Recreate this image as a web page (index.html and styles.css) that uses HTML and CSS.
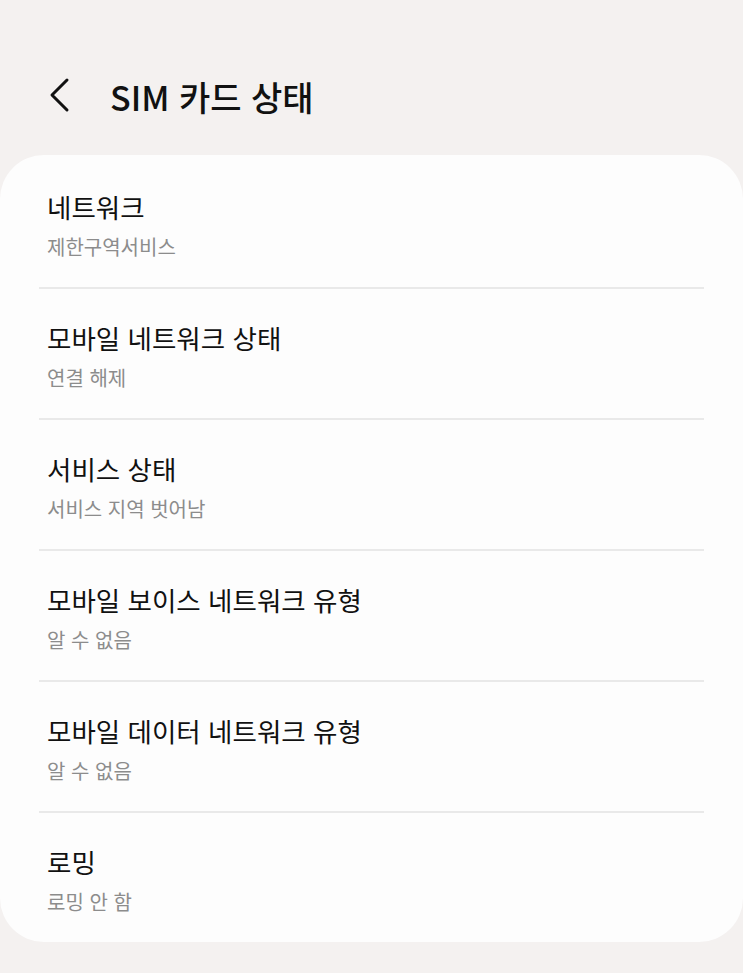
FILE: index.html
```html
<!DOCTYPE html>
<html lang="ko">
<head>
<meta charset="utf-8">
<link rel="stylesheet" href="styles.css">
</head>
<body>
<header class="top">
  <svg class="back" width="24" height="36" viewBox="0 0 24 36"><path d="M20 3 L5 18 L20 33" fill="none" stroke="#111" stroke-width="3" stroke-linecap="round" stroke-linejoin="round"/></svg>
  <h1 class="title">SIM 카드 상태</h1>
</header>
<main class="card">
  <div class="item first"><div class="name">네트워크</div><div class="value">제한구역서비스</div></div>
  <div class="item"><div class="name">모바일 네트워크 상태</div><div class="value">연결 해제</div></div>
  <div class="item"><div class="name">서비스 상태</div><div class="value">서비스 지역 벗어남</div></div>
  <div class="item"><div class="name">모바일 보이스 네트워크 유형</div><div class="value">알 수 없음</div></div>
  <div class="item"><div class="name">모바일 데이터 네트워크 유형</div><div class="value">알 수 없음</div></div>
  <div class="item last"><div class="name">로밍</div><div class="value">로밍 안 함</div></div>
</main>
</body>
</html>
```
FILE: styles.css
```css
html, body {
  margin: 0;
  padding: 0;
  background: #f4f1f0;
  font-family: "Noto Sans CJK KR", "Noto Sans", sans-serif;
}
.top {
  height: 155px;
  display: flex;
  align-items: center;
  padding-left: 47px;
  padding-top: 39px;
  box-sizing: border-box;
}
.back {
  display: block;
  margin-top: -4px;
}
.title {
  margin: 0 0 0 39px;
  font-size: 34px;
  font-weight: 500;
  color: #111;
  line-height: 40px;
}
.card {
  background: #fdfdfd;
  border-radius: 44px;
  padding: 0;
  overflow: hidden;
}
.item {
  margin: 0 39px;
  padding: 31px 8px 26px;
  border-bottom: 2px solid #e9e9e9;
}
.item.first {
  padding-top: 34px;
}
.item.last {
  border-bottom: 0;
  padding-bottom: 26px;
}
.name {
  font-size: 26.5px;
  line-height: 36px;
  color: #111;
}
.value {
  margin-top: 8px;
  font-size: 20px;
  line-height: 28px;
  color: #8c8c8c;
}
```
